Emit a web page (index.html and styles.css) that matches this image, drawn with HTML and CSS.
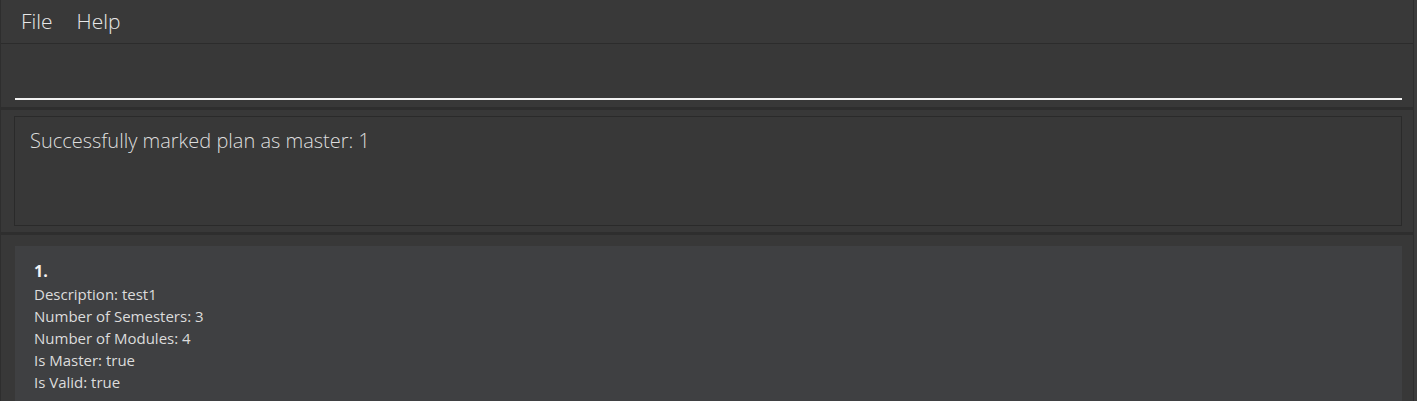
FILE: index.html
```html
<!DOCTYPE html>
<html>
<head>
<meta charset="utf-8">
<link rel="stylesheet" href="styles.css">
</head>
<body>
<div class="window">
  <div class="main">
    <div class="menubar">
      <span class="menu-item">File</span>
      <span class="menu-item">Help</span>
    </div>
    <div class="command-box">
      <div class="command-field"></div>
    </div>
    <div class="result-pane">
      <div class="result-box">Successfully marked plan as master: 1</div>
    </div>
    <div class="list-pane">
      <div class="card">
        <div class="card-title">1.</div>
        <div class="card-line">Description: test1</div>
        <div class="card-line">Number of Semesters: 3</div>
        <div class="card-line">Number of Modules: 4</div>
        <div class="card-line">Is Master: true</div>
        <div class="card-line">Is Valid: true</div>
      </div>
    </div>
  </div>
  <div class="edge"></div>
</div>
</body>
</html>
```
FILE: styles.css
```css
html, body {
  margin: 0;
  padding: 0;
  background: #383838;
  overflow: hidden;
}
.window {
  width: 1417px;
  height: 401px;
  display: flex;
  font-family: "Open Sans", "Noto Sans", sans-serif;
  color: #e6e6e6;
  overflow: hidden;
}
.main {
  flex: 1;
  display: flex;
  flex-direction: column;
  border-left: 1px solid #2e2e2e;
  border-right: 1px solid #2e2e2e;
  min-width: 0;
}
.main > * {
  flex-shrink: 0;
}
.edge {
  width: 3px;
  background: #3c3c3c;
}
.menubar {
  height: 44px;
  box-sizing: border-box;
  border-bottom: 1px solid #2c2c2c;
  display: flex;
  align-items: center;
  gap: 24px;
  padding-left: 20px;
  padding-bottom: 1px;
  background: #393939;
}
.menu-item {
  font-size: 21px;
  font-weight: 300;
  color: #e8e8e8;
  line-height: 1;
}
.command-box {
  height: 66px;
  box-sizing: border-box;
  padding: 0 11px 7px 14px;
  display: flex;
  flex-direction: column;
  justify-content: flex-end;
  border-bottom: 3px solid #2e2e2e;
  background: #383838;
}
.command-field {
  height: 2px;
  background: #f2f2f2;
}
.result-pane {
  padding: 6px 11px 6px 13px;
  border-bottom: 3px solid #2e2e2e;
}
.result-box {
  height: 110px;
  box-sizing: border-box;
  border: 1px solid #2a2a2a;
  padding: 12px 15px;
  font-size: 20px;
  font-weight: 300;
  color: #dedede;
  line-height: 1.2;
}
.list-pane {
  flex: 1;
  padding: 11px 11px 0 14px;
}
.card {
  background: #3f4042;
  height: 200px;
  padding: 13px 19px;
  box-sizing: border-box;
}
.card-title {
  font-weight: 700;
  font-size: 16px;
  color: #f4f4f4;
  line-height: 24px;
}
.card-line {
  font-size: 15px;
  line-height: 22px;
  color: #dcdcdc;
}
```
